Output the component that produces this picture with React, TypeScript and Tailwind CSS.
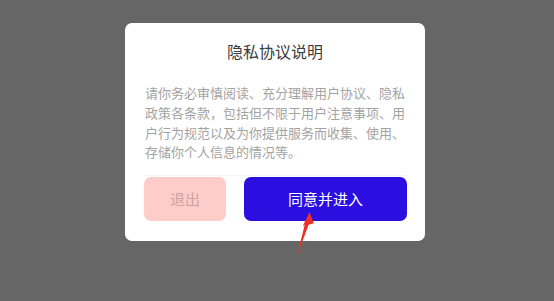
import React from "react";

export default function App() {
  return (
    <div
      className="relative w-[554px] h-[301px] bg-[#666666] pt-[23px] pl-[125px]"
      style={{ fontFamily: '"Noto Sans CJK SC", "Noto Sans", sans-serif' }}
    >
      <div className="w-[300px] h-[218px] bg-white rounded-[7px] pt-[16px] pb-[19px] flex flex-col">
        <div className="text-center text-[16px] leading-6 text-[#3d3d3d]">隐私协议说明</div>
        <p className="mt-[20px] px-[20px] text-[13px] leading-[19.8px] text-[#a3a3a3]">
          请你务必审慎阅读、充分理解用户协议、隐私政策各条款，包括但不限于用户注意事项、用户行为规范以及为你提供服务而收集、使用、存储你个人信息的情况等。
        </p>
        <div className="mt-[13px] ml-[19px] mr-[18px] border-t border-[#f4f4f4] pt-[1px] flex gap-[18px]">
          <button className="w-[82px] h-[44px] rounded-[7px] bg-[#ffcdc9] text-[15px] text-[#c9a4a3] flex items-center justify-center">
            退出
          </button>
          <button className="flex-1 h-[44px] rounded-[7px] bg-[#2b0ee0] text-[15px] text-white flex items-center justify-center">
            同意并进入
          </button>
        </div>
      </div>
      <svg className="absolute left-0 top-0 pointer-events-none" width="554" height="301" viewBox="0 0 554 301">
        <polygon
          points="309.5,212 313.8,223.2 308.6,224.8 297,256 304.8,224.6 302.6,226.6"
          fill="#ee2f25"
        />
      </svg>
    </div>
  );
}
